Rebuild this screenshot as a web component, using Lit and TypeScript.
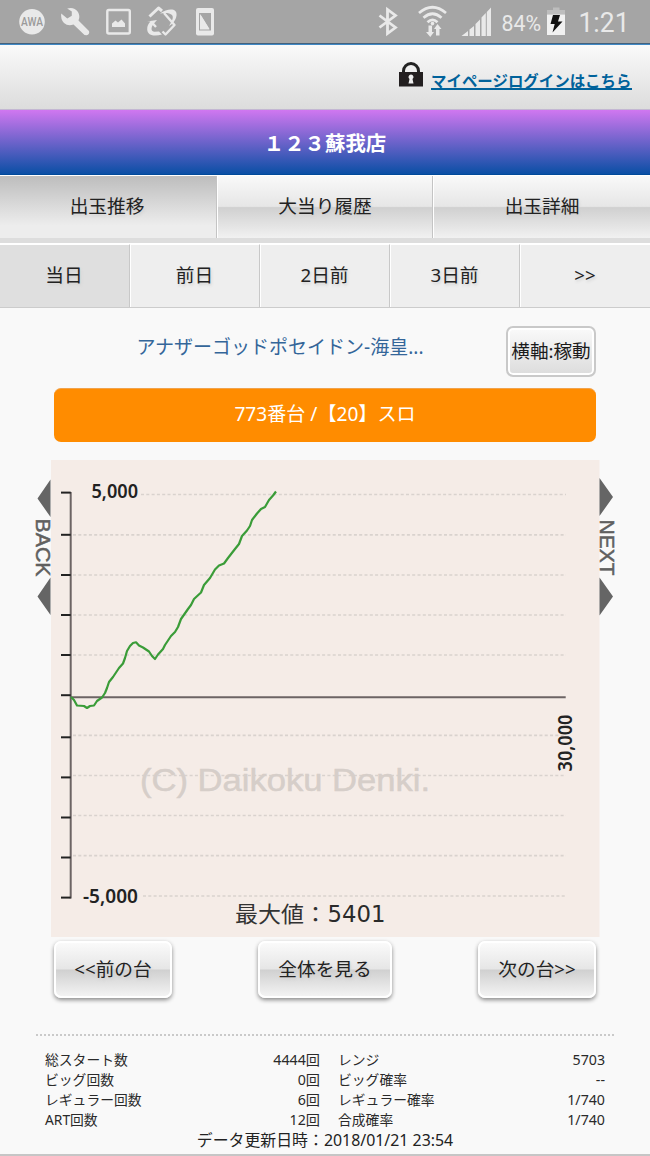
import { LitElement, html, svg, css } from "lit";
import { customElement } from "lit/decorators.js";

const GRID = [494.5, 534.8, 575, 615, 655, 735.3, 775.5, 815.5, 855.6, 896];
const TICKS = [492.6, 534.8, 575, 615, 655, 695.2, 737.3, 777.4, 817.5, 857.5, 897.6];
const LINE =
  "71,697 74,700 77,705.5 84,706 87,708 90,706 94,705.5 97,701 102,697.5 105,693 107,688 109,682 113,677 119,668 123,663.5 125,658 127,651 130,646 133,643 136,642.3 139,645.5 143,647.5 149,651.5 152,656 155,659 158,654.5 163,649 165,645 171,636 175,632 178,627 181,619 188,609 191,605 194,599 201,592.5 204,585 210,578 215,569.5 219,565.5 224,563.5 228,558 235,549 239,544 242,536 247,530.5 250,526 252,520 257,513.5 261,509 265,507 269,500 273,495.5 276,491.5";

const DAYS = ["当日", "前日", "2日前", "3日前", ">>"];
const STATS: [string, string, string, string][] = [
  ["総スタート数", "4444回", "レンジ", "5703"],
  ["ビッグ回数", "0回", "ビッグ確率", "--"],
  ["レギュラー回数", "6回", "レギュラー確率", "1/740"],
  ["ART回数", "12回", "合成確率", "1/740"],
];

@customElement("status-bar")
export class StatusBar extends LitElement {
  static styles = css`
    :host { display: block; height: 44px; background: #a5a5a5; border-bottom: 1px solid #44617c; }
    svg { display: block; }
    .r { font-family: Roboto, sans-serif; fill: #e9e9e9; }
  `;
  render() {
    return html`<svg width="650" height="43" viewBox="0 0 650 43" fill="none">
      <circle cx="32" cy="21.7" r="12.8" fill="#e9e9e9" />
      <text x="21" y="26.3" font-family="Roboto, sans-serif" font-size="12.5" font-weight="500" fill="#9a9a9a" textLength="22" lengthAdjust="spacingAndGlyphs">AWA</text>
      <path d="M67.200 8.500Q74 6.500 78 12Q80.500 16.500 78.500 20.500L89 31Q90 34.500 86.500 35.300L84.500 35L73.500 24.500Q68 26.500 64 23Q60.500 19.500 61.200 13.500L67.300 18.500L71.800 15.800V11.500Z" fill="#e9e9e9" />
      <rect x="107.300" y="10" width="22.500" height="23.500" rx="1.500" stroke="#e9e9e9" stroke-width="2.400" />
      <path d="M112 27V23.500L115.500 20.500L118 22.500L121.500 19.500L125 23.500V27Z" fill="#e9e9e9" />
      <path d="M149.500 16.500L158.500 8L162 11" stroke="#e9e9e9" stroke-width="3" stroke-linejoin="round" />
      <path d="M164 13L174.500 25L165.500 34.500L162.500 31.500M151 21.500L156 27" stroke="#e9e9e9" stroke-width="2.400" stroke-linejoin="round" />
      <path d="M160 13.500C168 8 177.500 8 176.500 15.500C176 20.500 172 24.500 169 26C172 21 174 17.500 172 15C170 12.500 164 12.500 160 13.500Z" fill="#e9e9e9" />
      <path d="M147 21.500L157 20L153.500 24C150.500 28 151 31.500 154.500 31.800L159 31.500L162 34.500C155 36.500 147.500 36 147.200 29.500C147 26 148.500 23.500 150.500 21.500Z" fill="#e9e9e9" />
      <rect x="196" y="8" width="18" height="27.500" rx="2" fill="#e9e9e9" />
      <path d="M199 13V30.500H211V13ZM200.500 14.500L209.500 29H200.500Z" fill="#a5a5a5" fill-rule="evenodd" />
      <path d="M200 14L209.500 29.500H200Z" fill="#e9e9e9" />
      <path d="M379.500 15.500L395.500 27.500L387.500 33.500V9.500L395.500 15.500L379.500 27.500" stroke="#e9e9e9" stroke-width="2.800" />
      <path d="M419 13Q432.500 1.500 446 13M423.500 17.800Q432.500 9.700 441.500 17.800M427.500 22.300Q432.500 17.500 437.500 22.300" stroke="#e9e9e9" stroke-width="2.700" />
      <circle cx="432.500" cy="23.600" r="1.800" fill="#e9e9e9" />
      <path d="M428.500 25.500H432V32H434L430.300 37L426 32H428.500ZM436 35.500H439.500V29H441.500L437.500 24L434 29H436Z" fill="#e9e9e9" />
      <path d="M461.500 36L468 31V36ZM469.500 29.500L474 26V36H469.500ZM475.500 24L480 19.500V36H475.500ZM481.500 17.500L485.800 13V36H481.500ZM486.800 12L491 7.500V36H486.800Z" fill="#e9e9e9" />
      <text class="r" x="501.500" y="31" font-size="22.500" textLength="39.500" lengthAdjust="spacingAndGlyphs">84%</text>
      <path d="M553 7.500H559.500V10H565V14.500H547V10H553Z" fill="#bdbdbd" />
      <rect x="547" y="14.500" width="18" height="20.500" fill="#f1f1f1" />
      <path d="M553 15H560L558 21.500H562.500L552.500 32.500L554.700 24H550.500Z" fill="#111" />
      <text class="r" x="578.500" y="32.300" font-size="28.500" textLength="51" lengthAdjust="spacingAndGlyphs">1:21</text>
    </svg>`;
  }
}

@customElement("slump-chart")
export class SlumpChart extends LitElement {
  static styles = css`
    :host { display: block; }
    svg { display: block; }
    .label { font-family: "Noto Sans", sans-serif; font-weight: 600; font-size: 19.5px; fill: #222; }
    .side { font-family: "Liberation Sans", sans-serif; font-size: 20px; fill: #606060; stroke: #606060; stroke-width: 0.5px; }
    .mark { font-family: "Liberation Sans", sans-serif; font-size: 31px; fill: #d6cec9; stroke: #d6cec9; stroke-width: 0.5px; }
    .max { font-family: "Noto Sans CJK JP", sans-serif; font-size: 21.5px; fill: #333; }
    .num { font-family: "DejaVu Sans", sans-serif; font-size: 23px; fill: #2a2a2a; }
  `;
  render() {
    return html`<svg width="590" height="477" viewBox="30 460 590 477" fill="none">
      <rect x="51" y="460" width="548.500" height="477" fill="#f5ece7" />
      <path d="M50.500 479.500V517L37.500 498.500ZM50.500 577.500V615L37.500 596.500ZM599.500 478V516L613 497ZM599.500 577.500V615.500L613 596.500Z" fill="#656565" />
      <text class="side" transform="translate(36 518.500) rotate(90)" textLength="58" lengthAdjust="spacingAndGlyphs">BACK</text>
      <text class="side" transform="translate(599.800 519.500) rotate(90)" textLength="56" lengthAdjust="spacingAndGlyphs">NEXT</text>
      ${GRID.map((y, i) => svg`<path d="M${i === 0 ? 141 : i === GRID.length - 1 ? 143 : 73} ${y}H566" stroke="#d9d2ce" stroke-width="1.700" stroke-dasharray="3 2.300" />`)}
      <text class="mark" x="140" y="791" textLength="290" lengthAdjust="spacingAndGlyphs">(C) Daikoku Denki.</text>
      <path d="M70.700 492V898.500" stroke="#6c6464" stroke-width="2" />
      <path d="M71 697.300H565.700" stroke="#6c6464" stroke-width="2" />
      ${TICKS.map((y) => svg`<path d="M61 ${y}H70.700" stroke="#222" stroke-width="2" />`)}
      <polyline points=${LINE} stroke="#3a9c38" stroke-width="2.200" stroke-linejoin="round" />
      <text class="label" x="91.500" y="497.500" textLength="46.500" lengthAdjust="spacingAndGlyphs">5,000</text>
      <text class="label" x="83" y="902.500" textLength="55" lengthAdjust="spacingAndGlyphs">-5,000</text>
      <text class="label" transform="translate(572 771.500) rotate(-90)" textLength="57" lengthAdjust="spacingAndGlyphs">30,000</text>
      <text class="max" x="235" y="921.500" textLength="92" lengthAdjust="spacingAndGlyphs">最大値：</text>
      <text class="num" x="327.500" y="922" textLength="58" lengthAdjust="spacingAndGlyphs">5401</text>
    </svg>`;
  }
}

@customElement("app-root")
export class AppRoot extends LitElement {
  static styles = css`
    :host {
      display: block; box-sizing: border-box; width: 650px; height: 1156px; overflow: hidden;
      background: #f9f9f9; color: #222;
      font: 18.7px/26px "Noto Sans", "Noto Sans CJK JP", sans-serif;
    }
    * { box-sizing: border-box; }
    .login {
      height: 65px; display: flex; justify-content: flex-end; align-items: center; gap: 8px;
      padding: 2px 18px 0 0; border-top: 1px solid #3f88c5;
      background: linear-gradient(#fafafa, #dcdcdc);
    }
    .lock { margin-top: -7px; }
    .login a {
      display: block; width: 201px; height: 20px; margin-top: 3px; border-bottom: 2px solid #00629b; color: #00629b;
      font: 700 15.45px/20px "Noto Sans CJK JP", sans-serif; white-space: nowrap; text-decoration: none;
    }
    .shop {
      height: 66px; border-top: 1px solid #c3b7d2; border-bottom: 1px solid #00499a;
      background: linear-gradient(#d077f0, #0a4fa5); color: #fff; text-align: center;
      font: 700 20.4px/64px "Noto Sans CJK JP", sans-serif;
    }
    .tabs { display: grid; grid-template-columns: 217px 216px 217px; height: 68px; padding-top: 1px; background: #fff; border-bottom: 5px solid #ddd; }
    .tab {
      text-align: center; line-height: 60px; border-left: 1px solid #fff; border-right: 1px solid #c4c4c4;
      background: linear-gradient(#f9f9f9, #e6e6e6 49%, #d0d0d0 51%, #f1f1f1);
      text-shadow: 1px 2px 3px #d0d0d0;
    }
    .tab:last-child { border-right: 0; }
    .tab.on { background: linear-gradient(#bdbdbd, #ededed 80%); border-left: 0; padding-right: 2px; }
    .days { display: grid; grid-template-columns: repeat(5, 1fr); height: 65px; border-top: 1px solid #fff; border-bottom: 1px solid #ccc; }
    .day { text-align: center; line-height: 60px; padding-right: 1px; background: #eee; border-left: 1px solid #fff; border-right: 1px solid #c8c8c8; border-top: 1px solid #fff; text-shadow: 1px 2px 3px #d0d0d0; }
    .day.on { background: #dfdfdf; border-left: 0; }
    .day:last-child { border-right: 0; }
    .machine { display: grid; grid-template-columns: 452px 90px; padding: 18px 0 0 54px; height: 80px; }
    .name { text-align: center; color: #346699; line-height: 43px; font-size: 19px; }
    .axis {
      width: 90px; height: 51px; border: 2px solid #c9c9c9; border-radius: 7px; text-align: center; line-height: 46px; white-space: nowrap;
      background: linear-gradient(#fafafa, #dcdcdc); box-shadow: inset 0 0 0 2px #fff; font-size: 18.6px; color: #1b1b1b;
    }
    .unit { margin: 0 54px 18px; height: 54px; border-radius: 7px; background: #ff8c00; border-top: 1px solid #f1a34c; color: #fff; text-align: center; line-height: 51px; font-size: 19.1px; white-space: nowrap; }
    .chart { padding-left: 30px; }
    .buttons { display: flex; justify-content: space-between; padding: 4px 18px 0; height: 99px; border-bottom: 2px dotted #cacaca; margin: 0 36px; }
    .btn {
      width: 118px; height: 57px; border: 2px solid #fff; border-radius: 7px; text-align: center; line-height: 51px; white-space: nowrap;
      background: linear-gradient(#fafafa, #e6e6e6 49%, #d0d0d0 51%, #f3f3f3) padding-box; box-shadow: 0 2px 4px #888;
      text-shadow: 1px 2px 3px #d0d0d0;
    }
    .btn.wide { width: 134px; }
    .stats { display: grid; grid-template-columns: 165px 110px 132px 153px; margin: 14px 45px 0; font-size: 13.8px; line-height: 20px; color: #2a2a2a; }
    .val { text-align: right; font-size: 14.2px; }
    .key.second { padding-left: 18px; }
    .date { text-align: center; font-size: 15.9px; line-height: 20px; white-space: nowrap; height: 24px; }
    .rule { height: 2px; background: #c6c6c6; }
  `;
  render() {
    return html`
      <status-bar></status-bar>
      <div class="login">
        <svg class="lock" width="24" height="25" viewBox="0 0 24 25">
          <path d="M4.500 11V9A7.500 7.500 0 0 1 19.500 9V11" fill="none" stroke="#222" stroke-width="3" />
          <rect x="0" y="10" width="24" height="14.500" fill="#231f20" />
          <path d="M12 12.500A2.500 2.500 0 0 1 13.500 17L14.500 21.500H9.500L10.500 17A2.500 2.500 0 0 1 12 12.500Z" fill="#eee" />
        </svg>
        <a>マイページログインはこちら</a>
      </div>
      <div class="shop">１２３蘇我店</div>
      <nav class="tabs">
        <div class="tab on">出玉推移</div>
        <div class="tab">大当り履歴</div>
        <div class="tab">出玉詳細</div>
      </nav>
      <nav class="days">${DAYS.map((d, i) => html`<div class="day ${i === 0 ? "on" : ""}">${d}</div>`)}</nav>
      <div class="machine">
        <div class="name">アナザーゴッドポセイドン-海皇...</div>
        <div class="axis">横軸:稼動</div>
      </div>
      <div class="unit">773番台 /【20】スロ</div>
      <div class="chart"><slump-chart></slump-chart></div>
      <div class="buttons">
        <div class="btn">&lt;&lt;前の台</div>
        <div class="btn wide">全体を見る</div>
        <div class="btn">次の台&gt;&gt;</div>
      </div>
      <div class="stats">
        ${STATS.map(([a, b, c, d]) => html`
          <div class="key">${a}</div><div class="val">${b}</div>
          <div class="key second">${c}</div><div class="val">${d}</div>`)}
      </div>
      <div class="date">データ更新日時：2018/01/21 23:54</div>
      <div class="rule"></div>
    `;
  }
}
